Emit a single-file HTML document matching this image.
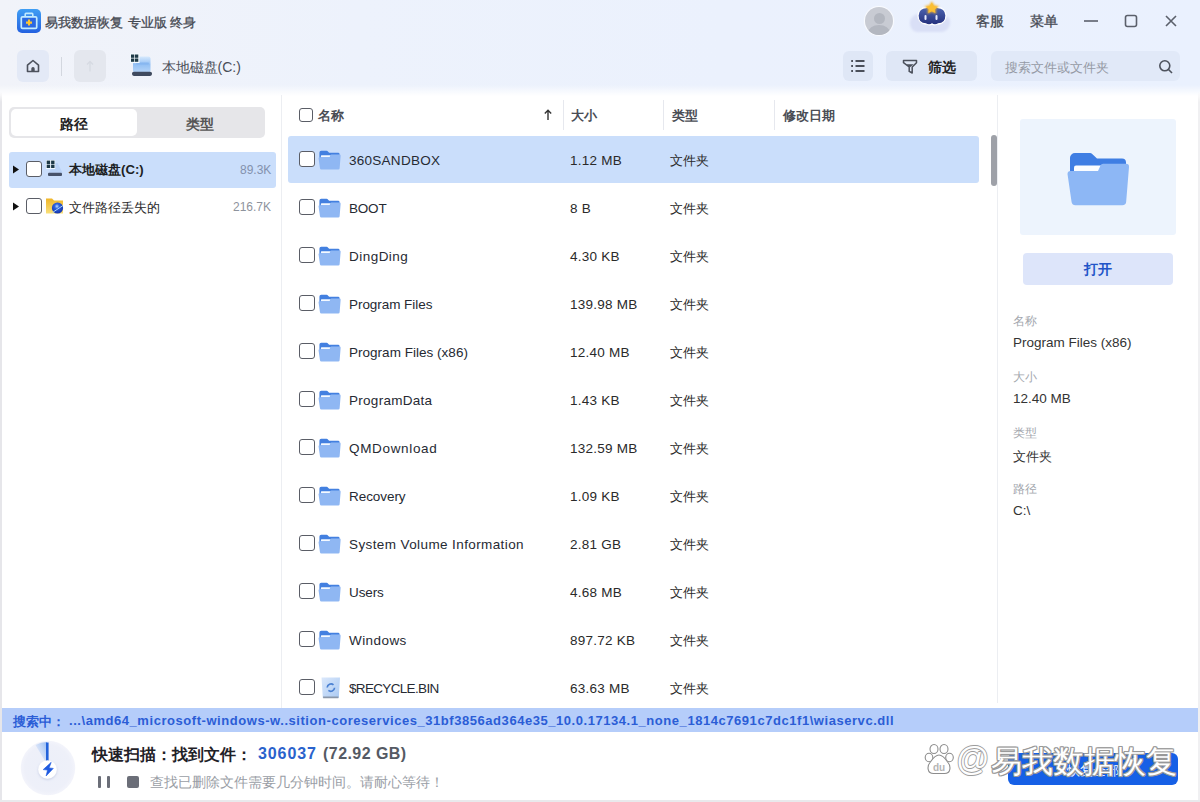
<!DOCTYPE html>
<html><head><meta charset="utf-8">
<style>
*{box-sizing:border-box;margin:0;padding:0}
html,body{width:1200px;height:802px;overflow:hidden}
body{font-family:"Liberation Sans",sans-serif;background:#fff;position:relative;color:#222}
.abs{position:absolute}
#hdr{left:0;top:0;width:1200px;height:100px;background:linear-gradient(180deg,rgba(255,255,255,0) 85px,#fff 96px),linear-gradient(90deg,#f1f3f9 0%,#edf2fc 30%,#ebf1fd 60%,#eaf1fe 100%)}
.btn{position:absolute;border-radius:6px;background:#dfe7f6}
.cb{position:absolute;width:16px;height:16px;border:1.5px solid #5a5d66;border-radius:3px;background:#fff}
.panel{position:absolute;background:#fff}
.row{position:absolute;left:288px;width:691px;height:47px}
.row.sel{background:#cadefb;border-radius:3px}
.fname{position:absolute;left:61px;top:16.5px;font-size:13.5px;color:#262a33;white-space:nowrap}
.fsize{position:absolute;left:282px;top:16.5px;font-size:13.5px;color:#2a2a2a;white-space:nowrap;letter-spacing:0.25px}
.ftype{position:absolute;left:381.5px;top:16px;font-size:13.4px;color:#2a2a2a;white-space:nowrap}
.fold{position:absolute;left:30.2px;top:13.7px}
.hcol{position:absolute;top:107px;font-size:13px;color:#4a4d55;font-weight:bold}
.vdiv{position:absolute;top:100px;width:1px;height:30px;background:#e6e8ee}
</style></head><body>
<div id="hdr" class="abs"></div>

<!-- title bar -->
<svg class="abs" style="left:17px;top:9px" width="24" height="24" viewBox="0 0 24 24">
 <defs><linearGradient id="lg" x1="0" y1="0" x2="0" y2="1"><stop offset="0" stop-color="#3f9ef4"/><stop offset="1" stop-color="#2461e0"/></linearGradient></defs>
 <rect x="0" y="0" width="24" height="24" rx="5" fill="url(#lg)"/>
 <path d="M8.2 7.3V5.2a.8.8 0 0 1 .8-.8h6a.8.8 0 0 1 .8.8v2.1" fill="none" stroke="#c2ebff" stroke-width="1.6"/>
 <rect x="4.3" y="7.8" width="15.4" height="11.6" rx="1.2" fill="#2a68e2" stroke="#c2ebff" stroke-width="1.7"/>
 <path d="M12 10.6v6M9 13.6h6" stroke="#ffc531" stroke-width="2.1"/>
</svg>
<div class="abs" style="left:45px;top:14px;font-size:13.4px;color:#454952;white-space:nowrap;-webkit-text-stroke:0.3px #454952">易我数据恢复</div>
<div class="abs" style="left:128.3px;top:14px;font-size:13.4px;color:#454952;white-space:nowrap;-webkit-text-stroke:0.3px #454952">专业版</div>
<div class="abs" style="left:169.8px;top:14px;font-size:13.4px;color:#454952;white-space:nowrap;-webkit-text-stroke:0.3px #454952">终身</div>

<div class="abs" style="left:865px;top:7px;width:28px;height:28px;border-radius:50%;background:#c8cbd3;overflow:hidden;box-shadow:0 0 1px 1px rgba(255,255,255,.8)">
  <div class="abs" style="left:8.5px;top:6px;width:11px;height:11px;border-radius:50%;background:#b3b7c0;filter:blur(.6px)"></div>
  <div class="abs" style="left:3px;top:18px;width:22px;height:16px;border-radius:50%;background:#b3b7c0;filter:blur(.6px)"></div>
</div>
<!-- mascot -->
<svg class="abs" style="left:906px;top:0px" width="50" height="36" viewBox="0 0 50 36">
 <defs><linearGradient id="mg" x1="0" y1="0" x2="0" y2="1"><stop offset="0" stop-color="#4f67b3"/><stop offset="1" stop-color="#232f7c"/></linearGradient>
 <filter id="bl" x="-20%" y="-20%" width="140%" height="140%"><feGaussianBlur stdDeviation="1.2"/></filter></defs>
 <path d="M4 23c0-5 4-9 9-9 3-4 9-5 13-3 5-2 11 1 12 5 4 0 7 3 6 8-1 5-5 8-9 8H12c-5 0-8-4-8-9z" fill="#d9dff6" filter="url(#bl)"/>
 <path d="M12 15.5c0-5 4-8 8-8 2-1 5-1 6 0 1-1 4-1 6 0 4 0 8 3 8 8 0 5-3 8.5-8 8.5-2 1-5 1-6 0-1 1-4 1-6 0-5 0-8-3.5-8-8.5z" fill="url(#mg)" stroke="#fff" stroke-width="1.3"/>
 <rect x="18.5" y="15" width="2" height="5" rx="1" fill="#e8ecff"/>
 <rect x="29.5" y="15" width="2" height="5" rx="1" fill="#e8ecff"/>
 <path d="M25.8 1l2.4 4.3 5 .8-3.8 3.4.9 4.6-4.5-2.4-4.5 2.4.9-4.6-3.8-3.4 5-.8z" fill="#f6b52e" filter="url(#bl)"/>
 <path d="M25.8 2.5l1.9 3.5 4 .7-3 2.7.7 3.7-3.6-1.9-3.6 1.9.7-3.7-3-2.7 4-.7z" fill="#fbbf33"/>
</svg>
<div class="abs" style="left:976px;top:13px;font-size:14px;color:#454952;-webkit-text-stroke:0.3px #454952">客服</div>
<div class="abs" style="left:1030px;top:13px;font-size:14px;color:#454952;-webkit-text-stroke:0.3px #454952">菜单</div>
<svg class="abs" style="left:1080px;top:10px" width="100" height="22" viewBox="0 0 100 22">
 <path d="M4 11h14" stroke="#5b606b" stroke-width="1.6"/>
 <rect x="45.5" y="5.5" width="11" height="11" rx="2" fill="none" stroke="#5b606b" stroke-width="1.6"/>
 <path d="M86 6l10 10M96 6l-10 10" stroke="#5b606b" stroke-width="1.6"/>
</svg>

<!-- toolbar -->
<div class="btn" style="left:17px;top:50px;width:32px;height:32px;background:#e3e9f6"></div>
<svg class="abs" style="left:25px;top:58px" width="16" height="16" viewBox="0 0 16 16">
 <path d="M2.5 7.2L8 2.5l5.5 4.7V13.5h-11z" fill="none" stroke="#4d525d" stroke-width="1.6" stroke-linejoin="round"/>
 <path d="M6.3 13.5V10.8a1.7 1.7 0 0 1 3.4 0V13.5z" fill="#4d525d"/>
</svg>
<div class="abs" style="left:61px;top:57px;width:1px;height:19px;background:#d3d7df"></div>
<div class="btn" style="left:74px;top:50px;width:32px;height:32px;background:#e4e7ee"></div>
<svg class="abs" style="left:84px;top:59px" width="12" height="14" viewBox="0 0 12 14">
 <path d="M6 12.5V2.5M3 5.5L6 2.5l3 3" fill="none" stroke="#d6dae2" stroke-width="1.3"/>
</svg>
<!-- drive icon -->
<svg class="abs" style="left:130px;top:53px" width="23" height="24" viewBox="0 0 23 24">
 <defs><linearGradient id="dg" x1="0" y1="0" x2="0" y2="1"><stop offset="0" stop-color="#d6e9fd"/><stop offset=".5" stop-color="#93c0f4"/><stop offset="1" stop-color="#b6d5f8"/></linearGradient></defs>
 <rect x="3" y="3.5" width="17.5" height="16" rx="2" fill="url(#dg)"/>
 <rect x="6" y="9.5" width="13" height="2" rx="1" fill="#7fb0ee" opacity=".7"/>
 <rect x="2" y="18.7" width="20" height="4.2" rx="1.8" fill="#3f4a5f"/>
 <rect x="0" y="0.5" width="9.5" height="9.5" fill="#f4fbff"/>
 <rect x="1" y="1.5" width="3.3" height="3.3" fill="#1e3a47"/><rect x="5" y="1.5" width="3.3" height="3.3" fill="#1e3a47"/>
 <rect x="1" y="5.5" width="3.3" height="3.3" fill="#1e3a47"/><rect x="5" y="5.5" width="3.3" height="3.3" fill="#1e3a47"/>
</svg>
<div class="abs" style="left:161.5px;top:59px;font-size:14px;color:#4a4e57">本地磁盘(C:)</div>

<div class="btn" style="left:843px;top:51px;width:30px;height:30px"></div>
<svg class="abs" style="left:850px;top:58px" width="16" height="16" viewBox="0 0 16 16">
 <path d="M5.5 3h9M5.5 8h9M5.5 13h9M1.2 3h1.8M1.2 8h1.8M1.2 13h1.8" stroke="#4a4f5a" stroke-width="1.8"/>
</svg>
<div class="btn" style="left:886px;top:51px;width:91px;height:30px"></div>
<svg class="abs" style="left:902px;top:59px" width="16" height="16" viewBox="0 0 16 16">
 <path d="M1.5 1.5h13v2.2l-4.3 4.3v6l-3-1.6V8L1.5 3.7z" fill="none" stroke="#4a4f5a" stroke-width="1.5" stroke-linejoin="round"/>
 <path d="M4.3 5.2h7.4L8 8.2z" fill="#4a4f5a"/>
</svg>
<div class="abs" style="left:928px;top:59px;font-size:14px;font-weight:bold;color:#222">筛选</div>
<div class="btn" style="left:991px;top:51px;width:189px;height:30px;background:#e1e9f8"></div>
<div class="abs" style="left:1005px;top:59px;font-size:13.4px;color:#959aa5">搜索文件或文件夹</div>
<svg class="abs" style="left:1158px;top:59px" width="16" height="16" viewBox="0 0 16 16">
 <circle cx="6.8" cy="6.8" r="5" fill="none" stroke="#4d525d" stroke-width="1.6"/>
 <path d="M10.5 10.5l3.5 3.5" stroke="#4d525d" stroke-width="1.6"/>
</svg>

<!-- panels -->
<div class="abs" style="left:0;top:92px;width:2px;height:710px;background:linear-gradient(180deg,rgba(228,228,232,0),#e6e6ea 10px)"></div>
<div class="abs" style="left:1198px;top:92px;width:2px;height:710px;background:linear-gradient(180deg,rgba(240,240,242,0),#f0f0f2 10px)"></div>
<div class="abs" style="left:0;top:800px;width:1200px;height:2px;background:#e9e9ec"></div>
<div class="abs" style="left:281px;top:95px;width:1px;height:613px;background:#eceef2"></div>
<div class="abs" style="left:997px;top:95px;width:1px;height:608px;background:#eceef2"></div>

<!-- left tabs -->
<div class="abs" style="left:9px;top:107px;width:256px;height:31px;border-radius:5px;background:#e6e6e9"></div>
<div class="abs" style="left:11px;top:109px;width:126px;height:27px;border-radius:5px;background:#fff"></div>
<div class="abs" style="left:60px;top:116px;font-size:14px;font-weight:bold;color:#222">路径</div>
<div class="abs" style="left:186px;top:116px;font-size:14px;color:#555;font-weight:bold">类型</div>

<!-- tree -->
<div class="abs" style="left:9px;top:152px;width:267px;height:36px;border-radius:3px;background:#cadefb"></div>
<svg class="abs" style="left:12px;top:165px" width="8" height="9"><path d="M1 0.5L7 4.5 1 8.5z" fill="#111"/></svg>
<div class="cb" style="left:26px;top:161px"></div>
<svg class="abs" style="left:45px;top:159px" width="19" height="19" viewBox="0 0 19 19">
 <path d="M9 4h3.5l5 9.8H4z" fill="#b9d2f6"/>
 <rect x="1" y="1" width="9.2" height="9" fill="#f0f8ff"/>
 <rect x="1.7" y="1.6" width="3.4" height="3.4" fill="#1c3846"/><rect x="6.1" y="1.6" width="3.4" height="3.4" fill="#1c3846"/>
 <rect x="1.7" y="5.6" width="3.4" height="3.4" fill="#1c3846"/><rect x="6.1" y="5.6" width="3.4" height="3.4" fill="#1c3846"/>
 <rect x="3" y="13.8" width="14" height="3.3" rx="1" fill="#475269"/>
</svg>
<div class="abs" style="left:69px;top:161px;font-size:13.2px;font-weight:bold;color:#1c1e24">本地磁盘(C:)</div>
<div class="abs" style="left:240px;top:163px;font-size:12px;color:#8391ad">89.3K</div>

<svg class="abs" style="left:12px;top:202px" width="8" height="9"><path d="M1 0.5L7 4.5 1 8.5z" fill="#111"/></svg>
<div class="cb" style="left:26px;top:198px"></div>
<svg class="abs" style="left:45px;top:197px" width="19" height="18" viewBox="0 0 19 18">
 <defs><linearGradient id="yf" x1="0" y1="0" x2="0" y2="1"><stop offset="0" stop-color="#f0b528"/><stop offset="1" stop-color="#f9e07a"/></linearGradient>
 <radialGradient id="ie" cx=".45" cy=".35" r=".6"><stop offset="0" stop-color="#b8dcff"/><stop offset=".35" stop-color="#2f63e0"/><stop offset="1" stop-color="#1536b0"/></radialGradient></defs>
 <path d="M1 1.5h6l2 2h9v13H1z" fill="url(#yf)"/>
 <circle cx="12.5" cy="11" r="5.6" fill="url(#ie)"/>
 <path d="M7.5 15.5L18 8.5" stroke="#a7d2f5" stroke-width="1"/>
</svg>
<div class="abs" style="left:69px;top:199px;font-size:13.3px;color:#2a2a2a">文件路径丢失的</div>
<div class="abs" style="left:233px;top:200px;font-size:12px;color:#8e939d">216.7K</div>

<!-- list header -->
<div class="cb" style="left:299px;top:108px;width:14px;height:14px"></div>
<div class="hcol" style="left:318px">名称</div>
<svg class="abs" style="left:543px;top:109px" width="10" height="12" viewBox="0 0 10 12"><path d="M5 11V1.5M1.8 4.5L5 1.3 8.2 4.5" fill="none" stroke="#333" stroke-width="1.4"/></svg>
<div class="vdiv" style="left:563px"></div>
<div class="hcol" style="left:571px">大小</div>
<div class="vdiv" style="left:663px"></div>
<div class="hcol" style="left:672px">类型</div>
<div class="vdiv" style="left:774px"></div>
<div class="hcol" style="left:783px">修改日期</div>

<div class="row sel" style="top:136px"><div class="cb" style="left:11px;top:15px"></div><svg class="fold" width="23" height="20.2" viewBox="0 0 64 56"><path d="M4 7a5 5 0 0 1 5-5h15a3 3 0 0 1 2.2 1L31 7.6h25a4 4 0 0 1 4 4V26H4z" fill="#4380e0"/><path d="M8 16.5a2 2 0 0 1 2-2h26l-3 6H8z" fill="#f4f9ff"/><path d="M1.5 23a3 3 0 0 1 3-3h27.5l2.5-5.5a3 3 0 0 1 2.6-1.8H60a3 3 0 0 1 3 3.2L60.2 50.5a4 4 0 0 1-4 3.8H9.5a4 4 0 0 1-4-3.7z" fill="#8fb7f3"/></svg><div class="fname" style="letter-spacing:0.267px">360SANDBOX</div><div class="fsize">1.12 MB</div><div class="ftype">文件夹</div></div>
<div class="row" style="top:184px"><div class="cb" style="left:11px;top:15px"></div><svg class="fold" width="23" height="20.2" viewBox="0 0 64 56"><path d="M4 7a5 5 0 0 1 5-5h15a3 3 0 0 1 2.2 1L31 7.6h25a4 4 0 0 1 4 4V26H4z" fill="#4380e0"/><path d="M8 16.5a2 2 0 0 1 2-2h26l-3 6H8z" fill="#f4f9ff"/><path d="M1.5 23a3 3 0 0 1 3-3h27.5l2.5-5.5a3 3 0 0 1 2.6-1.8H60a3 3 0 0 1 3 3.2L60.2 50.5a4 4 0 0 1-4 3.8H9.5a4 4 0 0 1-4-3.7z" fill="#8fb7f3"/></svg><div class="fname" style="letter-spacing:-0.2px">BOOT</div><div class="fsize">8 B</div><div class="ftype">文件夹</div></div>
<div class="row" style="top:232px"><div class="cb" style="left:11px;top:15px"></div><svg class="fold" width="23" height="20.2" viewBox="0 0 64 56"><path d="M4 7a5 5 0 0 1 5-5h15a3 3 0 0 1 2.2 1L31 7.6h25a4 4 0 0 1 4 4V26H4z" fill="#4380e0"/><path d="M8 16.5a2 2 0 0 1 2-2h26l-3 6H8z" fill="#f4f9ff"/><path d="M1.5 23a3 3 0 0 1 3-3h27.5l2.5-5.5a3 3 0 0 1 2.6-1.8H60a3 3 0 0 1 3 3.2L60.2 50.5a4 4 0 0 1-4 3.8H9.5a4 4 0 0 1-4-3.7z" fill="#8fb7f3"/></svg><div class="fname" style="letter-spacing:0.471px">DingDing</div><div class="fsize">4.30 KB</div><div class="ftype">文件夹</div></div>
<div class="row" style="top:280px"><div class="cb" style="left:11px;top:15px"></div><svg class="fold" width="23" height="20.2" viewBox="0 0 64 56"><path d="M4 7a5 5 0 0 1 5-5h15a3 3 0 0 1 2.2 1L31 7.6h25a4 4 0 0 1 4 4V26H4z" fill="#4380e0"/><path d="M8 16.5a2 2 0 0 1 2-2h26l-3 6H8z" fill="#f4f9ff"/><path d="M1.5 23a3 3 0 0 1 3-3h27.5l2.5-5.5a3 3 0 0 1 2.6-1.8H60a3 3 0 0 1 3 3.2L60.2 50.5a4 4 0 0 1-4 3.8H9.5a4 4 0 0 1-4-3.7z" fill="#8fb7f3"/></svg><div class="fname" style="letter-spacing:-0.05px">Program Files</div><div class="fsize">139.98 MB</div><div class="ftype">文件夹</div></div>
<div class="row" style="top:328px"><div class="cb" style="left:11px;top:15px"></div><svg class="fold" width="23" height="20.2" viewBox="0 0 64 56"><path d="M4 7a5 5 0 0 1 5-5h15a3 3 0 0 1 2.2 1L31 7.6h25a4 4 0 0 1 4 4V26H4z" fill="#4380e0"/><path d="M8 16.5a2 2 0 0 1 2-2h26l-3 6H8z" fill="#f4f9ff"/><path d="M1.5 23a3 3 0 0 1 3-3h27.5l2.5-5.5a3 3 0 0 1 2.6-1.8H60a3 3 0 0 1 3 3.2L60.2 50.5a4 4 0 0 1-4 3.8H9.5a4 4 0 0 1-4-3.7z" fill="#8fb7f3"/></svg><div class="fname" style="letter-spacing:0.022px">Program Files (x86)</div><div class="fsize">12.40 MB</div><div class="ftype">文件夹</div></div>
<div class="row" style="top:376px"><div class="cb" style="left:11px;top:15px"></div><svg class="fold" width="23" height="20.2" viewBox="0 0 64 56"><path d="M4 7a5 5 0 0 1 5-5h15a3 3 0 0 1 2.2 1L31 7.6h25a4 4 0 0 1 4 4V26H4z" fill="#4380e0"/><path d="M8 16.5a2 2 0 0 1 2-2h26l-3 6H8z" fill="#f4f9ff"/><path d="M1.5 23a3 3 0 0 1 3-3h27.5l2.5-5.5a3 3 0 0 1 2.6-1.8H60a3 3 0 0 1 3 3.2L60.2 50.5a4 4 0 0 1-4 3.8H9.5a4 4 0 0 1-4-3.7z" fill="#8fb7f3"/></svg><div class="fname" style="letter-spacing:0.28px">ProgramData</div><div class="fsize">1.43 KB</div><div class="ftype">文件夹</div></div>
<div class="row" style="top:424px"><div class="cb" style="left:11px;top:15px"></div><svg class="fold" width="23" height="20.2" viewBox="0 0 64 56"><path d="M4 7a5 5 0 0 1 5-5h15a3 3 0 0 1 2.2 1L31 7.6h25a4 4 0 0 1 4 4V26H4z" fill="#4380e0"/><path d="M8 16.5a2 2 0 0 1 2-2h26l-3 6H8z" fill="#f4f9ff"/><path d="M1.5 23a3 3 0 0 1 3-3h27.5l2.5-5.5a3 3 0 0 1 2.6-1.8H60a3 3 0 0 1 3 3.2L60.2 50.5a4 4 0 0 1-4 3.8H9.5a4 4 0 0 1-4-3.7z" fill="#8fb7f3"/></svg><div class="fname" style="letter-spacing:0.667px">QMDownload</div><div class="fsize">132.59 MB</div><div class="ftype">文件夹</div></div>
<div class="row" style="top:472px"><div class="cb" style="left:11px;top:15px"></div><svg class="fold" width="23" height="20.2" viewBox="0 0 64 56"><path d="M4 7a5 5 0 0 1 5-5h15a3 3 0 0 1 2.2 1L31 7.6h25a4 4 0 0 1 4 4V26H4z" fill="#4380e0"/><path d="M8 16.5a2 2 0 0 1 2-2h26l-3 6H8z" fill="#f4f9ff"/><path d="M1.5 23a3 3 0 0 1 3-3h27.5l2.5-5.5a3 3 0 0 1 2.6-1.8H60a3 3 0 0 1 3 3.2L60.2 50.5a4 4 0 0 1-4 3.8H9.5a4 4 0 0 1-4-3.7z" fill="#8fb7f3"/></svg><div class="fname" style="letter-spacing:-0.057px">Recovery</div><div class="fsize">1.09 KB</div><div class="ftype">文件夹</div></div>
<div class="row" style="top:520px"><div class="cb" style="left:11px;top:15px"></div><svg class="fold" width="23" height="20.2" viewBox="0 0 64 56"><path d="M4 7a5 5 0 0 1 5-5h15a3 3 0 0 1 2.2 1L31 7.6h25a4 4 0 0 1 4 4V26H4z" fill="#4380e0"/><path d="M8 16.5a2 2 0 0 1 2-2h26l-3 6H8z" fill="#f4f9ff"/><path d="M1.5 23a3 3 0 0 1 3-3h27.5l2.5-5.5a3 3 0 0 1 2.6-1.8H60a3 3 0 0 1 3 3.2L60.2 50.5a4 4 0 0 1-4 3.8H9.5a4 4 0 0 1-4-3.7z" fill="#8fb7f3"/></svg><div class="fname" style="letter-spacing:0.396px">System Volume Information</div><div class="fsize">2.81 GB</div><div class="ftype">文件夹</div></div>
<div class="row" style="top:568px"><div class="cb" style="left:11px;top:15px"></div><svg class="fold" width="23" height="20.2" viewBox="0 0 64 56"><path d="M4 7a5 5 0 0 1 5-5h15a3 3 0 0 1 2.2 1L31 7.6h25a4 4 0 0 1 4 4V26H4z" fill="#4380e0"/><path d="M8 16.5a2 2 0 0 1 2-2h26l-3 6H8z" fill="#f4f9ff"/><path d="M1.5 23a3 3 0 0 1 3-3h27.5l2.5-5.5a3 3 0 0 1 2.6-1.8H60a3 3 0 0 1 3 3.2L60.2 50.5a4 4 0 0 1-4 3.8H9.5a4 4 0 0 1-4-3.7z" fill="#8fb7f3"/></svg><div class="fname" style="letter-spacing:-0.1px">Users</div><div class="fsize">4.68 MB</div><div class="ftype">文件夹</div></div>
<div class="row" style="top:616px"><div class="cb" style="left:11px;top:15px"></div><svg class="fold" width="23" height="20.2" viewBox="0 0 64 56"><path d="M4 7a5 5 0 0 1 5-5h15a3 3 0 0 1 2.2 1L31 7.6h25a4 4 0 0 1 4 4V26H4z" fill="#4380e0"/><path d="M8 16.5a2 2 0 0 1 2-2h26l-3 6H8z" fill="#f4f9ff"/><path d="M1.5 23a3 3 0 0 1 3-3h27.5l2.5-5.5a3 3 0 0 1 2.6-1.8H60a3 3 0 0 1 3 3.2L60.2 50.5a4 4 0 0 1-4 3.8H9.5a4 4 0 0 1-4-3.7z" fill="#8fb7f3"/></svg><div class="fname" style="letter-spacing:0.433px">Windows</div><div class="fsize">897.72 KB</div><div class="ftype">文件夹</div></div>
<div class="row" style="top:664px"><div class="cb" style="left:11px;top:15px"></div><svg class="fold" width="20" height="22" viewBox="0 0 20 22" style="left:32.5px;top:12.5px"><defs><linearGradient id="rb" x1="0" y1="0" x2="1" y2="1"><stop offset="0" stop-color="#dbe8fb"/><stop offset="1" stop-color="#a9c9f3"/></linearGradient></defs><path d="M0.5 0.5h18.5l-1.2 20.5H1.8z" fill="url(#rb)"/><path d="M2 19.5h15.5l-.2 1.8H2.2z" fill="#8a97aa"/><path d="M6.2 10.5a3.8 3.8 0 0 1 6.3-2.6M13.6 10.8a3.8 3.8 0 0 1-6.2 2.6" stroke="#4a80d2" stroke-width="1.7" fill="none"/></svg><div class="fname" style="letter-spacing:-0.664px">$RECYCLE.BIN</div><div class="fsize">63.63 MB</div><div class="ftype">文件夹</div></div>

<!-- scrollbar -->
<div class="abs" style="left:991px;top:135px;width:6px;height:51px;border-radius:3px;background:#9ea1a8"></div>

<!-- right panel -->
<div class="abs" style="left:1019.5px;top:119px;width:156px;height:116px;border-radius:3px;background:#edf4fd"></div>
<svg class="abs" style="left:1066px;top:151px" width="64" height="56" viewBox="0 0 64 56">
 <path d="M4 7a5 5 0 0 1 5-5h15a3 3 0 0 1 2.2 1L31 7.6h25a4 4 0 0 1 4 4V26H4z" fill="#3f7ee3"/>
 <path d="M8 16.5a2 2 0 0 1 2-2h26l-3 6H8z" fill="#fbfdff"/>
 <path d="M1.5 23a3 3 0 0 1 3-3h27.5l2.5-5.5a3 3 0 0 1 2.6-1.8H60a3 3 0 0 1 3 3.2L60.2 50.5a4 4 0 0 1-4 3.8H9.5a4 4 0 0 1-4-3.7z" fill="#8db7f5"/>
</svg>
<div class="abs" style="left:1023px;top:253px;width:150px;height:32px;border-radius:4px;background:#dde5fa"></div>
<div class="abs" style="left:1084px;top:261px;font-size:14px;font-weight:bold;color:#2255c8">打开</div>

<div class="abs" style="left:1013px;top:313px;font-size:12px;color:#a3a7ae">名称</div>
<div class="abs" style="left:1013px;top:335px;font-size:13.5px;color:#333">Program Files (x86)</div>
<div class="abs" style="left:1013px;top:369px;font-size:12px;color:#a3a7ae">大小</div>
<div class="abs" style="left:1013px;top:391px;font-size:13.5px;color:#333">12.40 MB</div>
<div class="abs" style="left:1013px;top:425px;font-size:12px;color:#a3a7ae">类型</div>
<div class="abs" style="left:1013px;top:448px;font-size:13.4px;color:#333">文件夹</div>
<div class="abs" style="left:1013px;top:481px;font-size:12px;color:#a3a7ae">路径</div>
<div class="abs" style="left:1013px;top:503px;font-size:13.5px;color:#333">C:\</div>

<!-- status bar -->
<div class="abs" style="left:2px;top:708px;width:1196px;height:24px;background:#b5cdfa"></div>
<div class="abs" style="left:13px;top:713px;font-size:13px;font-weight:bold;color:#2b5dd6;white-space:nowrap">搜索中：</div>
<div class="abs" style="left:69px;top:713px;font-size:13px;font-weight:bold;color:#2b5dd6;white-space:nowrap;letter-spacing:0.55px">...\amd64_microsoft-windows-w..sition-coreservices_31bf3856ad364e35_10.0.17134.1_none_1814c7691c7dc1f1\wiaservc.dll</div>

<!-- bottom -->
<div class="panel" style="left:3px;top:732px;width:1194px;height:68px"></div>
<svg class="abs" style="left:16px;top:736px" width="64" height="64" viewBox="0 0 64 64">
 <defs>
  <radialGradient id="sc" cx=".5" cy=".5" r=".5"><stop offset="0" stop-color="#eceff9"/><stop offset=".85" stop-color="#eef0f9"/><stop offset="1" stop-color="#f3f4fb"/></radialGradient>
  <linearGradient id="wd" x1="1" y1="0" x2="0" y2="1"><stop offset="0" stop-color="#8ab4f2"/><stop offset="1" stop-color="#dde8fa" stop-opacity="0"/></linearGradient>
  <filter id="sh" x="-50%" y="-50%" width="200%" height="200%"><feDropShadow dx="0" dy="1" stdDeviation="1.2" flood-color="#7e8fc0" flood-opacity=".35"/></filter>
 </defs>
 <circle cx="32" cy="32" r="27.2" fill="url(#sc)"/>
 <path d="M32 30L31 6A26 26 0 0 0 19.5 9z" fill="url(#wd)"/>
 <path d="M30 6.5h2.6V25h-2.6z" fill="#2262da"/>
 <circle cx="31.5" cy="33.5" r="9.3" fill="#fff" filter="url(#sh)"/>
 <path d="M35.2 26.3L27.2 33.6l4.3.5-1.4 5.9 7.2-7.6-4.2-.5z" fill="#1f5ae0" stroke="#1f5ae0" stroke-width=".6" stroke-linejoin="round"/>
</svg>
<div class="abs" style="left:92px;top:745px;font-size:16px;font-weight:bold;color:#1f2127;white-space:nowrap">快速扫描：找到文件：</div>
<div class="abs" style="left:258px;top:745px;font-size:16px;font-weight:bold;color:#2a62cc;white-space:nowrap;letter-spacing:0.9px">306037</div>
<div class="abs" style="left:323px;top:745px;font-size:16px;font-weight:bold;color:#555a64;white-space:nowrap;letter-spacing:0.45px">(72.92 GB)</div>
<div class="abs" style="left:98px;top:776px;width:3px;height:12px;border-radius:1px;background:#6b6e78"></div>
<div class="abs" style="left:107px;top:776px;width:3px;height:12px;border-radius:1px;background:#6b6e78"></div>
<div class="abs" style="left:127px;top:776px;width:12px;height:12px;border-radius:2px;background:#6b6e78"></div>
<div class="abs" style="left:150px;top:774px;font-size:13.7px;color:#9a9ea6;white-space:nowrap">查找已删除文件需要几分钟时间。请耐心等待！</div>

<div class="abs" style="left:1008px;top:752.5px;width:170px;height:32.5px;border-radius:6px;background:#1660e6"></div>
<div class="abs" style="left:1067px;top:762px;font-size:13px;color:#fff">恢复全部</div>
<!-- watermark -->
<svg class="abs" style="left:922px;top:742px" width="36" height="38" viewBox="0 0 36 38">
 <g fill="#fff" stroke="#8d8d8d" stroke-width="1.1">
  <ellipse cx="12" cy="7" rx="4" ry="4.5"/><ellipse cx="22" cy="7" rx="4" ry="4.5"/>
  <ellipse cx="7" cy="15.5" rx="3.8" ry="4.2"/><ellipse cx="27.5" cy="15.5" rx="3.8" ry="4.2"/>
  <path d="M17 13c-4 0-6.5 4-9 7.5-3 3.5-3 11 3.5 11h11c6.5 0 6.5-7.5 3.5-11-2.5-3.5-5-7.5-9-7.5z"/>
 </g>
 <text x="17" y="28.5" font-family="Liberation Sans" font-size="10" font-weight="bold" fill="#b4b4b4" text-anchor="middle">du</text>
</svg>
<div class="abs" style="left:956px;top:740px;font-size:33px;color:#fff;white-space:nowrap;text-shadow:.8px 0 #9c9c9c,-.8px 0 #9c9c9c,0 .8px #9c9c9c,0 -.8px #9c9c9c,0 0 2px rgba(0,0,0,.25)">@</div>
<div class="abs" style="left:991px;top:741px;font-size:31px;color:#fff;white-space:nowrap;text-shadow:.8px 0 #999,-.8px 0 #999,0 .8px #999,0 -.8px #999,.6px .6px #999,-.6px -.6px #999,.6px -.6px #999,-.6px .6px #999,0 0 2px rgba(0,0,0,.2)">易我数据恢复</div>
</body></html>
